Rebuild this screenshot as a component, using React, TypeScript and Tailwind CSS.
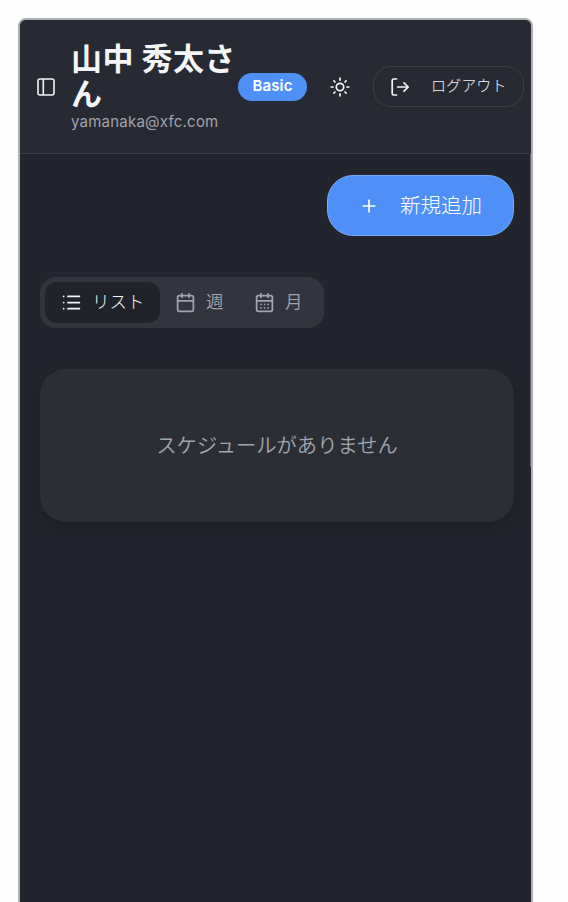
import React from "react";
import { CalendarDays, Calendar, List, Plus } from "lucide-react";

function SidebarIcon() {
  return (
    <svg className="size-5 shrink-0" viewBox="0 0 20 20" fill="none" stroke="currentColor" strokeWidth="1.600">
      <rect x="2" y="2" width="16" height="16" rx="2" />
      <path d="M7.300 2v16" />
    </svg>
  );
}

function SunIcon() {
  return (
    <svg className="ml-[23px] size-5 shrink-0" viewBox="0 0 20 20" fill="none" stroke="currentColor" strokeWidth="1.700" strokeLinecap="round">
      <circle cx="10" cy="10" r="3.700" />
      <path d="M10 1.200v1.900M10 16.900v1.900M1.200 10h1.900M16.900 10h1.900M3.900 3.900l1.100 1.100M15 15l1.100 1.100M3.900 16.100 5 15M15 5l1.100-1.100" />
    </svg>
  );
}

function LogoutIcon() {
  return (
    <svg className="size-5 shrink-0" viewBox="0 0 20 20" fill="none" stroke="currentColor" strokeWidth="1.700" strokeLinecap="round" strokeLinejoin="round">
      <path d="M6.500 2H3.700Q2.200 2 2.200 3.500V16.500Q2.200 18 3.700 18H6.500M7.600 10H18.200M14 5.800 18.200 10 14 14.200" />
    </svg>
  );
}

function Header() {
  return (
    <header className="flex h-[134px] shrink-0 items-center border-b border-[#3a3d45] bg-[#272a32] pl-4 text-[#f4f5f7]">
      <SidebarIcon />
      <div className="ml-[15px] w-[167px] shrink-0 pb-px">
        <h1 className="text-[31px] leading-[35px] font-bold tracking-[0.4px]">山中 秀太さん</h1>
        <p className="mt-px text-[15px] leading-5 tracking-[0.22px] text-[#a1a4ae]">yamanaka@xfc.com</p>
      </div>
      <span className="flex h-7 w-[69px] shrink-0 items-center justify-center rounded-full bg-[#4f90f8] text-[15px] font-semibold tracking-[0.15px] text-white">Basic</span>
      <SunIcon />
      <button className="ml-[23px] flex h-[41px] w-[151px] shrink-0 items-center rounded-[18px] border border-[#3c3e44] pl-4">
        <LogoutIcon />
        <span className="ml-[21px] pb-px text-[15px] leading-5 font-light tracking-[0.1px] whitespace-nowrap">ログアウト</span>
      </button>
    </header>
  );
}

function ViewTabs() {
  return (
    <div className="mt-[41px] flex h-[51px] w-[284px] items-center rounded-2xl bg-[#32353d] p-[5px] text-[17.5px] text-[#a1a4ae]">
      <button className="flex h-[41px] w-[115px] items-center rounded-xl bg-[#20232a] pl-4 font-light text-[#f4f5f7]">
        <List className="size-[21px]" strokeWidth={2} />
        <span className="ml-2.5">リスト</span>
      </button>
      <button className="flex h-[41px] w-[79px] items-center pl-[15px] font-[350]">
        <Calendar className="size-[21px]" strokeWidth={2} />
        <span className="ml-2.5">週</span>
      </button>
      <button className="flex h-[41px] items-center pl-[15px] font-[350]">
        <CalendarDays className="size-[21px]" strokeWidth={2} />
        <span className="ml-2.5">月</span>
      </button>
    </div>
  );
}

export default function App() {
  return (
    <div className="h-[902px] overflow-hidden bg-[#fdfdfd] pt-[18px] pl-[18px] font-['Inter','Noto_Sans_CJK_JP',sans-serif]">
      <div className="relative flex h-[900px] w-[515px] flex-col overflow-hidden rounded-t-lg border-2 border-[#adb0b3] bg-[#22252d]">
        <Header />
        <main className="flex flex-col px-5 pt-[21px]">
          <button className="mr-[-3px] flex h-[61px] w-[187px] items-center self-end rounded-[26px] border border-[#77aafa] bg-[#4f90f8] pl-[31px] text-white">
            <Plus className="size-5" strokeWidth={2} />
            <span className="ml-[21px] text-[20.5px] leading-7 font-light">新規追加</span>
          </button>
          <ViewTabs />
          <section className="mt-[41px] mr-[-3px] flex h-[153px] items-center justify-center rounded-[26px] bg-[#2c2e36] pt-0.5 text-[20.3px] font-[350] text-[#a1a4ae] shadow-[0_5px_16px_rgba(0,0,0,0.18)]">
            スケジュールがありません
          </section>
        </main>
        <div className="absolute top-[134px] right-0 h-[313px] w-px bg-[#606267]" />
      </div>
    </div>
  );
}
